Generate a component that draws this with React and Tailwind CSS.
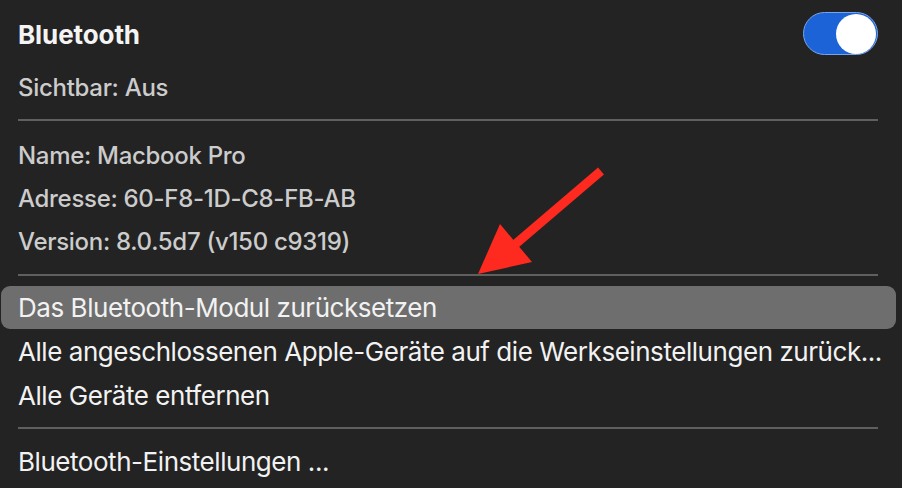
import { useState } from 'react';

const font = { fontFamily: 'Inter, "Noto Sans", sans-serif' };

function Separator({ className = '' }) {
  return <div className={`h-[2px] bg-[#5f5f5f] ${className}`} />;
}

function InfoRow({ children }) {
  return (
    <div className="h-[43px] flex items-center text-[24px] font-medium text-[#cccccc] tracking-[-0.3px]">
      {children}
    </div>
  );
}

function MenuItem({ children, active, height = 'h-[44px]' }) {
  return (
    <div
      className={`${height} flex items-center text-[26px] text-[#f2f2f2] tracking-[-0.45px] whitespace-nowrap ${
        active ? '-ml-[17px] -mr-[18px] pl-[17px] rounded-[9px] bg-[#6e6e6e]' : ''
      }`}
    >
      {children}
    </div>
  );
}

function Toggle({ on, onChange }) {
  return (
    <button
      onClick={() => onChange(!on)}
      className={`w-[75px] h-[43px] rounded-full flex items-center p-[1px] border border-[#78a4ec] ${
        on ? 'bg-[#1d63d8] justify-end' : 'bg-[#555] justify-start'
      }`}
    >
      <span className="w-[40px] h-[40px] rounded-full bg-white" />
    </button>
  );
}

// red annotation arrow laid over the menu
function Arrow() {
  return (
    <svg className="absolute left-0 top-0 pointer-events-none" width="902" height="488">
      <line x1="601" y1="171" x2="512" y2="247" stroke="#ff2a1f" strokeWidth="9" />
      <polygon points="478,274 500,224 532,262" fill="#ff2a1f" />
    </svg>
  );
}

export default function App() {
  const [enabled, setEnabled] = useState(true);

  return (
    <div className="relative w-[902px] h-[488px] bg-[#232323] pl-[18px] pr-[24px] overflow-hidden" style={font}>
      <div className="mt-[12px] h-[43px] flex items-center justify-between">
        <span className="text-[26px] font-bold text-[#f4f4f4] tracking-[-0.1px] mt-[2px]">Bluetooth</span>
        <Toggle on={enabled} onChange={setEnabled} />
      </div>

      <div className="mt-[11px] h-[44px] flex items-center text-[24px] font-medium text-[#cccccc] tracking-[-0.3px]">
        Sichtbar: Aus
      </div>
      <Separator className="mt-[9px]" />

      <div className="mt-[13px]">
        <InfoRow>Name: Macbook Pro</InfoRow>
        <InfoRow>Adresse: 60-F8-1D-C8-FB-AB</InfoRow>
        <InfoRow>Version: 8.0.5d7 (v150 c9319)</InfoRow>
      </div>
      <Separator className="mt-[11px]" />

      <div className="mt-[10px]">
        <MenuItem active height="h-[43px]">Das Bluetooth-Modul zurücksetzen</MenuItem>
        <MenuItem>Alle angeschlossenen Apple-Geräte auf die Werkseinstellungen zurück...</MenuItem>
        <MenuItem>Alle Geräte entfernen</MenuItem>
      </div>
      <Separator className="mt-[10px]" />

      <div className="mt-[10px]">
        <MenuItem>Bluetooth-Einstellungen ...</MenuItem>
      </div>

      <Arrow />
    </div>
  );
}
